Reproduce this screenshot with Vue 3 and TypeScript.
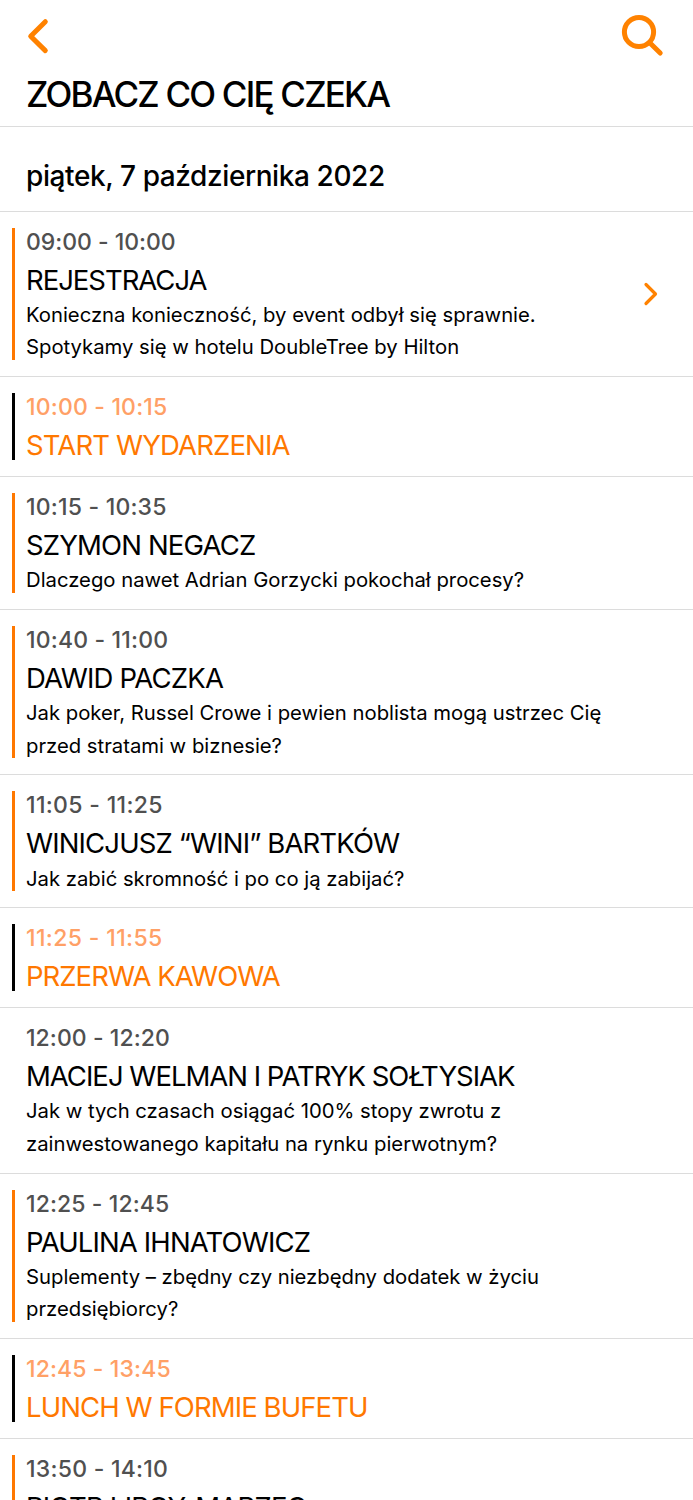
<script setup lang="ts">
interface Item {
  time: string
  title: string
  lines?: string[]
  kind?: 'break' | 'plain'
  arrow?: boolean
  timeTracking: number
  tracking: number
}
const items: Item[] = [
  { time: '09:00 - 10:00', title: 'REJESTRACJA', lines: ['Konieczna konieczność, by event odbył się sprawnie.', 'Spotykamy się w hotelu DoubleTree by Hilton'], arrow: true, timeTracking: -0.03, tracking: -1.03 },
  { time: '10:00 - 10:15', title: 'START WYDARZENIA', kind: 'break', timeTracking: 0.18, tracking: -0.87 },
  { time: '10:15 - 10:35', title: 'SZYMON NEGACZ', lines: ['Dlaczego nawet Adrian Gorzycki pokochał procesy?'], timeTracking: 0.2, tracking: -0.85 },
  { time: '10:40 - 11:00', title: 'DAWID PACZKA', lines: ['Jak poker, Russel Crowe i pewien noblista mogą ustrzec Cię', 'przed stratami w biznesie?'], timeTracking: 0.17, tracking: -0.8 },
  { time: '11:05 - 11:25', title: 'WINICJUSZ “WINI” BARTKÓW', lines: ['Jak zabić skromność i po co ją zabijać?'], timeTracking: 0.33, tracking: -0.87 },
  { time: '11:25 - 11:55', title: 'PRZERWA KAWOWA', kind: 'break', timeTracking: 0.36, tracking: -0.98 },
  { time: '12:00 - 12:20', title: 'MACIEJ WELMAN I PATRYK SOŁTYSIAK', lines: ['Jak w tych czasach osiągać 100% stopy zwrotu z', 'zainwestowanego kapitału na rynku pierwotnym?'], kind: 'plain', timeTracking: 0.07, tracking: -1 },
  { time: '12:25 - 12:45', title: 'PAULINA IHNATOWICZ', lines: ['Suplementy – zbędny czy niezbędny dodatek w życiu', 'przedsiębiorcy?'], timeTracking: 0.1, tracking: -0.87 },
  { time: '12:45 - 13:45', title: 'LUNCH W FORMIE BUFETU', kind: 'break', timeTracking: 0.12, tracking: -0.91 },
  { time: '13:50 - 14:10', title: 'PIOTR LIROY-MARZEC', timeTracking: 0.25, tracking: -0.75 },
]
</script>

<template>
  <main class="screen">
    <header class="top">
      <div class="nav">
        <svg class="back" width="24" height="38" viewBox="0 0 24 38"><path d="M19.3 4.7 4.7 19.2 19.3 33.6" /></svg>
        <svg class="search" width="46" height="46" viewBox="0 0 46 46"><circle cx="18" cy="19" r="14.6" /><path d="m29 30 10.2 10" /></svg>
      </div>
      <h1>ZOBACZ CO CIĘ CZEKA</h1>
    </header>
    <h2>piątek, 7 października 2022</h2>
    <section v-for="item in items" :key="item.time" class="item" :class="item.kind">
      <i class="bar"></i>
      <div class="body">
        <div class="time" :style="{ letterSpacing: item.timeTracking + 'px' }">{{ item.time }}</div>
        <div class="title" :style="{ letterSpacing: item.tracking + 'px' }">{{ item.title }}</div>
        <div v-for="line in item.lines" :key="line" class="line">{{ line }}</div>
      </div>
      <svg v-if="item.arrow" class="arrow" width="16" height="26" viewBox="0 0 16 26"><path d="m3 3.5 9.5 9.5-9.5 9.5" /></svg>
    </section>
  </main>
</template>

<style>
body { margin: 0; background: #fff; }
</style>
<style scoped>
.screen { height: 1500px; overflow: hidden; font-family: Inter, "Liberation Sans", sans-serif; color: #000; background: #fff; }
.top { height: 127px; box-sizing: border-box; border-bottom: 1px solid #dcdcdc; padding: 0 26px; }
.nav { height: 72px; display: flex; justify-content: space-between; align-items: center; }
svg { fill: none; stroke: #ff8200; stroke-width: 5; stroke-linecap: round; stroke-linejoin: round; }
h1 { margin: 0; font-size: 35px; line-height: 44px; font-weight: 500; letter-spacing: -1.8px; white-space: nowrap; }
h2 { margin: 0; height: 84.6px; box-sizing: border-box; border-bottom: 1px solid #dcdcdc; padding: 30px 26px 0; font-size: 28px; line-height: 38px; font-weight: 500; letter-spacing: -0.41px; }
.item { display: flex; border-bottom: 1px solid #dcdcdc; padding: 16px 0 16px 12px; }
.bar { width: 3px; background: #ff7800; flex: none; }
.break .bar { background: #000; }
.plain .bar { background: none; }
.body { flex: 1; padding-left: 11px; margin-bottom: -4px; white-space: nowrap; }
.time { font-size: 23px; line-height: 29px; font-weight: 450; color: #505050; }
.title { margin: 4.1px 0 0.1px; font-size: 27.5px; line-height: 38px; font-weight: 370; }
.line { font-size: 20.3px; line-height: 32.6px; letter-spacing: -0.01px; }
.break .title { color: #ff7800; }
.break .time { color: #ffa066; }
.arrow { align-self: center; margin-right: 34px; stroke-width: 3.2; }
</style>
